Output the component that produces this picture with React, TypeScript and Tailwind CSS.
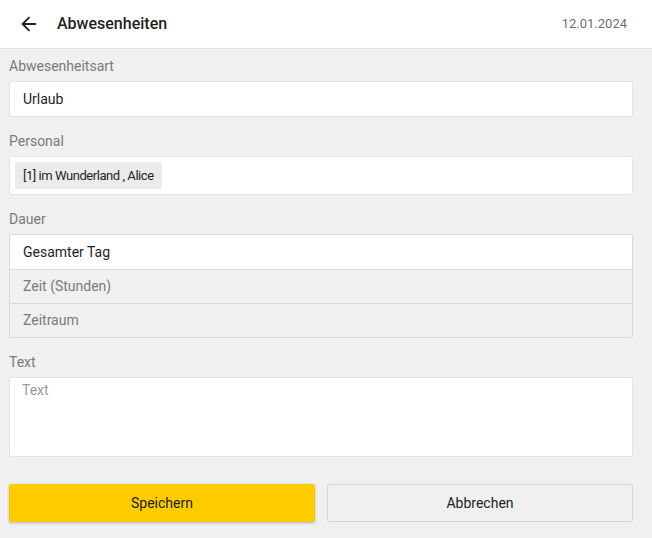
import { ArrowLeft } from 'lucide-react'

const durations = [
  { name: 'Gesamter Tag', active: true },
  { name: 'Zeit (Stunden)', active: false },
  { name: 'Zeitraum', active: false },
]

function Label({ children }: { children: React.ReactNode }) {
  return <div className="text-[14px] leading-5 text-[#7a7a7a] mb-[5px]">{children}</div>
}

export default function App() {
  return (
    <div className="min-h-[538px] bg-[#f0f0f0] font-['Roboto',sans-serif] text-[#1f1f1f]">
      {/* Header */}
      <header className="h-[49px] bg-white border-b border-[#e0e0e0] flex items-center pl-[18px] pr-[25px]">
        <ArrowLeft className="w-[22px] h-[22px] text-[#222]" strokeWidth={2} />
        <h1 className="ml-[17px] text-[16px] font-medium text-[#1f1f1f]">Abwesenheiten</h1>
        <span className="ml-auto text-[13px] text-[#6f6f6f]">12.01.2024</span>
      </header>

      <main className="pl-[9px] pr-[19px] pt-[7px]">
        {/* Abwesenheitsart */}
        <Label>Abwesenheitsart</Label>
        <div className="h-[36px] bg-white border border-[#e3e3e3] rounded-[2px] flex items-center px-[13px] text-[14px]">
          Urlaub
        </div>

        {/* Personal */}
        <div className="mt-[14px]">
          <Label>Personal</Label>
          <div className="h-[39px] bg-white border border-[#e3e3e3] rounded-[2px] flex items-center px-[5px]">
            <span className="h-[27px] flex items-center px-[8px] bg-[#ebebeb] rounded-[2px] text-[13px] tracking-[-0.45px]">
              [1] im Wunderland , Alice
            </span>
          </div>
        </div>

        {/* Dauer */}
        <div className="mt-[14px]">
          <Label>Dauer</Label>
          <div className="border border-[#d9d9d9] rounded-[2px] overflow-hidden">
            {durations.map((d, i) => (
              <div
                key={d.name}
                className={`h-[34px] flex items-center px-[13px] text-[14px] ${
                  i > 0 ? 'border-t border-[#d9d9d9]' : ''
                } ${d.active ? 'bg-white text-[#1f1f1f]' : 'bg-[#f0f0f0] text-[#7a7a7a]'}`}
              >
                {d.name}
              </div>
            ))}
          </div>
        </div>

        {/* Text */}
        <div className="mt-[14px]">
          <Label>Text</Label>
          <textarea
            placeholder="Text"
            className="block w-full h-[80px] bg-white border border-[#e3e3e3] rounded-[2px] px-[12px] pt-[2px] text-[14px] placeholder:text-[#9a9a9a] resize-none outline-none"
          />
        </div>

        {/* Actions */}
        <div className="mt-[27px] grid grid-cols-2 gap-[12px]">
          <button className="h-[38px] bg-[#ffcc00] rounded-[2px] shadow-[0_1px_3px_rgba(0,0,0,0.25)] text-[14px] text-[#222]">
            Speichern
          </button>
          <button className="h-[38px] bg-[#f0f0f0] border border-[#d6d6d6] rounded-[2px] text-[14px] text-[#222]">
            Abbrechen
          </button>
        </div>
      </main>
    </div>
  )
}
